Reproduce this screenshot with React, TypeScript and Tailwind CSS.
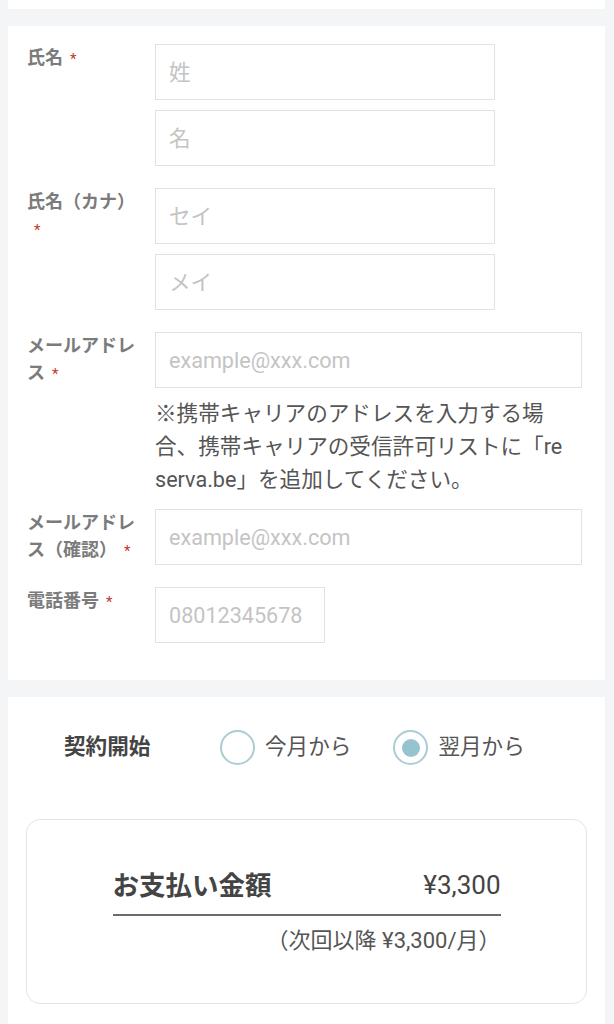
import { useState } from 'react'

const font = { fontFamily: "Roboto, 'Noto Sans CJK JP', sans-serif" }

function Req() {
  return <span className="ml-[7px] text-[15px] leading-none font-normal text-[#c0392b]">*</span>
}

function Label({ children }: { children: React.ReactNode }) {
  return (
    <div className="w-[128px] shrink-0 pr-[8px] text-[18px] font-bold leading-[27px] text-[#7b7b7b]">
      {children}
    </div>
  )
}

function Field({ placeholder, width }: { placeholder: string; width: string }) {
  return (
    <input
      placeholder={placeholder}
      className={`${width} h-[56px] border border-[#e2e2e2] bg-white px-[13px] text-[21.6px] text-[#444] outline-none placeholder:text-[#c4c4c4]`}
    />
  )
}

function Radio({ label, checked, onClick }: { label: string; checked: boolean; onClick: () => void }) {
  return (
    <button onClick={onClick} className="flex items-center gap-[10px]">
      <span className="flex h-[35px] w-[35px] items-center justify-center rounded-full border-2 border-[#a9cdd4] bg-white">
        {checked && <span className="h-[18px] w-[18px] rounded-full bg-[#97c2cf]" />}
      </span>
      <span className="text-[21.6px] text-[#555]">{label}</span>
    </button>
  )
}

export default function App() {
  const [start, setStart] = useState('next')

  return (
    <div className="min-h-screen bg-[#f4f5f7] pl-[8px] pr-[9px]" style={font}>
      <div className="h-[9px] bg-white" />

      {/* Customer info */}
      <div className="mt-[17px] flex flex-col gap-[22px] bg-white pt-[18px] pb-[37px] pl-[19px] pr-[23px]">
        <div className="flex">
          <Label>
            氏名
            <Req />
          </Label>
          <div className="flex flex-col gap-[10px]">
            <Field placeholder="姓" width="w-[340px]" />
            <Field placeholder="名" width="w-[340px]" />
          </div>
        </div>

        <div className="flex">
          <Label>
            氏名（カナ）
            <Req />
          </Label>
          <div className="flex flex-col gap-[10px]">
            <Field placeholder="セイ" width="w-[340px]" />
            <Field placeholder="メイ" width="w-[340px]" />
          </div>
        </div>

        <div className="flex">
          <Label>
            メールアドレス
            <Req />
          </Label>
          <div className="flex flex-1 flex-col">
            <Field placeholder="example@xxx.com" width="w-full" />
            <p className="mt-[9px] break-all pr-[12px] text-[21.6px] leading-[33px] text-[#555]">
              ※携帯キャリアのアドレスを入力する場合、携帯キャリアの受信許可リストに「reserva.be」を追加してください。
            </p>
          </div>
        </div>

        <div className="-mt-[9px] flex">
          <Label>
            メールアドレス（確認）
            <Req />
          </Label>
          <div className="flex flex-1">
            <Field placeholder="example@xxx.com" width="w-full" />
          </div>
        </div>

        <div className="flex">
          <Label>
            電話番号
            <Req />
          </Label>
          <Field placeholder="08012345678" width="w-[170px]" />
        </div>
      </div>

      {/* Contract */}
      <div className="mt-[17px] bg-white px-[18px] pt-[33px] pb-[40px]">
        <div className="flex items-center pl-[38px]">
          <span className="w-[156px] text-[21.6px] font-bold text-[#444]">契約開始</span>
          <div className="flex items-center gap-[42px]">
            <Radio label="今月から" checked={start === 'this'} onClick={() => setStart('this')} />
            <Radio label="翌月から" checked={start === 'next'} onClick={() => setStart('next')} />
          </div>
        </div>

        <div className="mt-[54px] flex justify-center rounded-[14px] border-[1.5px] border-[#e4e4e4] pt-[46px] pb-[46px]">
          <div className="w-[388px]">
            <div className="flex items-center justify-between border-b-2 border-[#6b6b6b] pb-[8px] text-[#444]">
              <span className="text-[26.5px] font-bold">お支払い金額</span>
              <span className="text-[26px]">¥3,300</span>
            </div>
            <div className="mt-[8px] text-right text-[22px] text-[#555]">（次回以降 ¥3,300/月）</div>
          </div>
        </div>
      </div>
    </div>
  )
}
